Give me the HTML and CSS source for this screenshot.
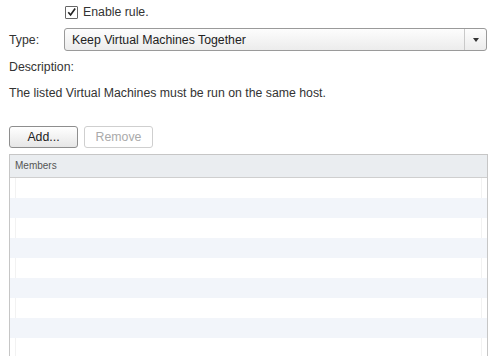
FILE: index.html
```html
<!DOCTYPE html>
<html>
<head>
<meta charset="utf-8">
<link rel="stylesheet" href="styles.css">
</head>
<body>
<div class="page">
  <label class="enable-row">
    <span class="checkbox">
      <svg width="12" height="12" viewBox="0 0 12 12"><path d="M2.5 6.2 L5 9.2 L10 2.2" fill="none" stroke="#222" stroke-width="1.8"/></svg>
    </span>
    <span class="enable-text">Enable rule.</span>
  </label>
  <div class="type-row">
    <span class="label">Type:</span>
    <div class="select">
      <span class="select-value">Keep Virtual Machines Together</span>
      <span class="select-btn"><span class="arrow"></span></span>
    </div>
  </div>
  <div class="desc-label">Description:</div>
  <div class="desc-text">The listed Virtual Machines must be run on the same host.</div>
  <div class="buttons">
    <button class="btn">Add...</button>
    <button class="btn disabled">Remove</button>
  </div>
  <div class="table">
    <div class="thead">Members</div>
    <div class="row"></div>
    <div class="row alt"></div>
    <div class="row"></div>
    <div class="row alt"></div>
    <div class="row"></div>
    <div class="row alt"></div>
    <div class="row"></div>
    <div class="row alt"></div>
    <div class="row"></div>
  </div>
</div>
</body>
</html>
```

FILE: styles.css
```css
html, body {
  margin: 0;
  padding: 0;
  background: #fff;
}
body {
  font-family: "Liberation Sans", Arial, sans-serif;
  font-size: 12.3px;
  color: #333;
  overflow: hidden;
}
.page {
  width: 478px;
  padding-left: 9px;
}
.enable-row {
  display: flex;
  align-items: center;
  height: 22px;
  padding-left: 56px;
  margin-top: 1px;
}
.checkbox {
  width: 11px;
  height: 11px;
  border: 1px solid #666;
  background: #fff;
  display: flex;
  align-items: center;
  justify-content: center;
  border-radius: 1px;
}
.checkbox svg {
  display: block;
}
.enable-text {
  margin-left: 5px;
}
.type-row {
  display: flex;
  align-items: center;
  margin-top: 5px;
  height: 23px;
}
.label {
  width: 55px;
}
.select {
  flex: 1;
  height: 21px;
  border: 1px solid #9a9a9a;
  border-radius: 3px;
  background: linear-gradient(#fdfdfd, #ececec);
  display: flex;
  align-items: center;
}
.select-value {
  flex: 1;
  padding-left: 7px;
  color: #222;
}
.select-btn {
  width: 21px;
  height: 21px;
  border-left: 1px solid #c9c9c9;
  display: flex;
  align-items: center;
  justify-content: center;
}
.arrow {
  width: 0;
  height: 0;
  border-left: 3px solid transparent;
  border-right: 3px solid transparent;
  border-top: 4px solid #333;
}
.desc-label {
  margin-top: 9px;
  height: 14px;
  line-height: 14px;
}
.desc-text {
  margin-top: 12px;
  height: 14px;
  line-height: 14px;
}
.buttons {
  display: flex;
  gap: 6px;
  margin-top: 26px;
}
.btn {
  font-family: "Liberation Sans", Arial, sans-serif;
  font-size: 12.3px;
  color: #222;
  width: 69px;
  height: 22px;
  border: 1px solid #8e8e8e;
  border-radius: 3px;
  background: linear-gradient(#ffffff, #e6e6e6);
  padding: 0;
}
.btn.disabled {
  color: #aaa;
  border-color: #cfcfcf;
  background: #fff;
}
.table {
  margin-top: 6px;
  border: 1px solid #c6c6c6;
  border-bottom: none;
  width: 477px;
}
.thead {
  height: 22px;
  line-height: 22px;
  background: #eaedf0;
  border-bottom: 1px solid #cfcfcf;
  font-size: 10px;
  color: #555;
  padding-left: 5px;
}
.row {
  height: 20px;
  border-left: 1px solid #f2f2f2;
  border-right: 1px solid #f2f2f2;
  margin: 0 5px;
}
.row.alt {
  background: #f2f5fa;
  margin: 0;
  padding: 0 5px;
  border: none;
}
```
